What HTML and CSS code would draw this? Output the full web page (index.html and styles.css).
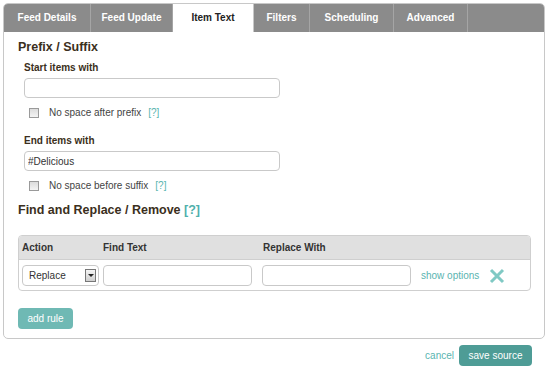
FILE: index.html
```html
<!DOCTYPE html>
<html lang="en">
<head>
    <meta charset="UTF-8">
    <title>Edit Source - Item Text</title>
    <link rel="stylesheet" href="styles.css">
</head>
<body>
    <div class="panel">
        <div class="tabs">
            <div class="tab tab-details">Feed Details</div>
            <div class="tab tab-update">Feed Update</div>
            <div class="tab tab-text active">Item Text</div>
            <div class="tab tab-filters">Filters</div>
            <div class="tab tab-schedule">Scheduling</div>
            <div class="tab tab-advanced">Advanced</div>
        </div>

        <div class="content">
            <h2 class="section-title">Prefix / Suffix</h2>

            <div class="field">
                <label class="field-label">Start items with</label>
                <input class="text-input wide" type="text" value="">
                <div class="check-row">
                    <span class="checkbox"></span>
                    <span>No space after prefix</span>
                    <a class="help">[?]</a>
                </div>
            </div>

            <div class="field">
                <label class="field-label">End items with</label>
                <input class="text-input wide" type="text" value="#Delicious">
                <div class="check-row">
                    <span class="checkbox"></span>
                    <span>No space before suffix</span>
                    <a class="help">[?]</a>
                </div>
            </div>

            <h2 class="section-title find-title">Find and Replace / Remove <a class="help">[?]</a></h2>

            <div class="rules">
                <div class="rules-head">
                    <span class="col-action">Action</span>
                    <span class="col-find">Find Text</span>
                    <span class="col-replace">Replace With</span>
                </div>
                <div class="rule-row">
                    <div class="select">
                        <span>Replace</span>
                        <span class="select-arrow"></span>
                    </div>
                    <input class="text-input cell" type="text">
                    <input class="text-input cell" type="text">
                    <a class="show-options">show options</a>
                    <svg class="remove" width="16" height="16" viewBox="0 0 16 16">
                        <path d="M2 2 L14 14 M14 2 L2 14" stroke="#80c9c4" stroke-width="3"/>
                    </svg>
                </div>
            </div>

            <button class="btn add-rule">add rule</button>
        </div>
    </div>

    <div class="footer">
        <a class="cancel">cancel</a>
        <button class="btn save">save source</button>
    </div>
</body>
</html>
```

FILE: styles.css
```css
* {
    margin: 0;
    padding: 0;
    box-sizing: border-box;
}

body {
    font-family: 'Liberation Sans', Arial, sans-serif;
    font-size: 10px;
    color: #333;
    background: white;
    padding: 3px;
}

.panel {
    width: 542px;
    border: 1px solid #c8c8c8;
    border-radius: 5px;
    overflow: hidden;
}

.tabs {
    display: flex;
    background: #8b8b8b;
    height: 28px;
}

.tab {
    line-height: 28px;
    text-align: center;
    color: white;
    font-weight: bold;
    border-right: 1px solid #a5a5a5;
}

.tab-details { width: 87px; }
.tab-update { width: 82px; }
.tab-text { width: 81px; }
.tab-filters { width: 56px; }
.tab-schedule { width: 84px; }
.tab-advanced { width: 74px; }

.tab.active {
    background: white;
    color: #222;
    border-right-color: #c8c8c8;
}

.content {
    padding: 8px 14px 9px;
}

.section-title {
    font-size: 12.5px;
    line-height: 15px;
    font-weight: bold;
    color: #3b2f20;
}

.section-title .help {
    color: #4fb0ab;
    margin-left: 0;
}

.find-title {
    margin-top: 11px;
}

.field {
    padding-left: 6px;
    margin-top: 6px;
}

.field + .field {
    margin-top: 15px;
}

.field-label {
    display: block;
    font-weight: bold;
    line-height: 13px;
    color: #3b2f20;
    margin-bottom: 4px;
}

.text-input {
    display: block;
    height: 20px;
    border: 1px solid #c9c9c9;
    border-radius: 4px;
    padding: 0 3px;
    font-family: inherit;
    font-size: 10px;
    color: #333;
    background: white;
}

.text-input.wide {
    width: 256px;
}

.check-row {
    display: flex;
    align-items: center;
    line-height: 13px;
    margin-top: 8px;
    margin-left: 5px;
    color: #444;
}

.checkbox {
    width: 10px;
    height: 10px;
    border: 1px solid #9a9a9a;
    background: linear-gradient(#dcdcdc, #f4f4f4);
    margin-right: 10px;
}

.help {
    color: #5ab4b0;
    margin-left: 7px;
}

.rules {
    margin-top: 17px;
    width: 513px;
    border: 1px solid #cfcfcf;
    border-radius: 4px;
    overflow: hidden;
}

.rules-head {
    display: flex;
    background: #e0e0e0;
    height: 24px;
    align-items: center;
    font-weight: bold;
    color: #333;
    border-bottom: 1px solid #cfcfcf;
    padding-left: 3px;
}

.col-action {
    width: 81px;
}

.col-find {
    width: 160px;
}

.rule-row {
    display: flex;
    align-items: center;
    gap: 4px;
    padding: 5px 3px 4px;
}

.select {
    width: 77px;
    height: 21px;
    border: 1px solid #c9c9c9;
    border-radius: 4px;
    display: flex;
    align-items: center;
    justify-content: space-between;
    padding: 0 2px 0 6px;
    color: #333;
}

.select-arrow {
    width: 11px;
    height: 13px;
    border: 1px solid #777;
    background: linear-gradient(#f4f4f4, #cfcfcf);
    position: relative;
}

.select-arrow::after {
    content: "";
    position: absolute;
    left: 2px;
    top: 4px;
    border-left: 3px solid transparent;
    border-right: 3px solid transparent;
    border-top: 3px solid #222;
}

.text-input.cell {
    width: 149px;
    height: 21px;
}

.text-input.cell + .text-input.cell {
    margin-left: 6px;
}

.show-options {
    color: #5ab4b0;
    margin-left: 6px;
}

.remove {
    margin-left: 6px;
}

.btn {
    border: none;
    border-radius: 4px;
    color: white;
    font-family: inherit;
    font-size: 10px;
    cursor: pointer;
}

.add-rule {
    display: block;
    margin-top: 17px;
    width: 55px;
    height: 21px;
    background: #6fb9b4;
}

.footer {
    display: flex;
    justify-content: flex-end;
    align-items: center;
    width: 529px;
    margin-top: 6px;
}

.cancel {
    color: #5ab4b0;
    margin-right: 5px;
}

.save {
    width: 73px;
    height: 21px;
    background: #4e9c96;
}
```
